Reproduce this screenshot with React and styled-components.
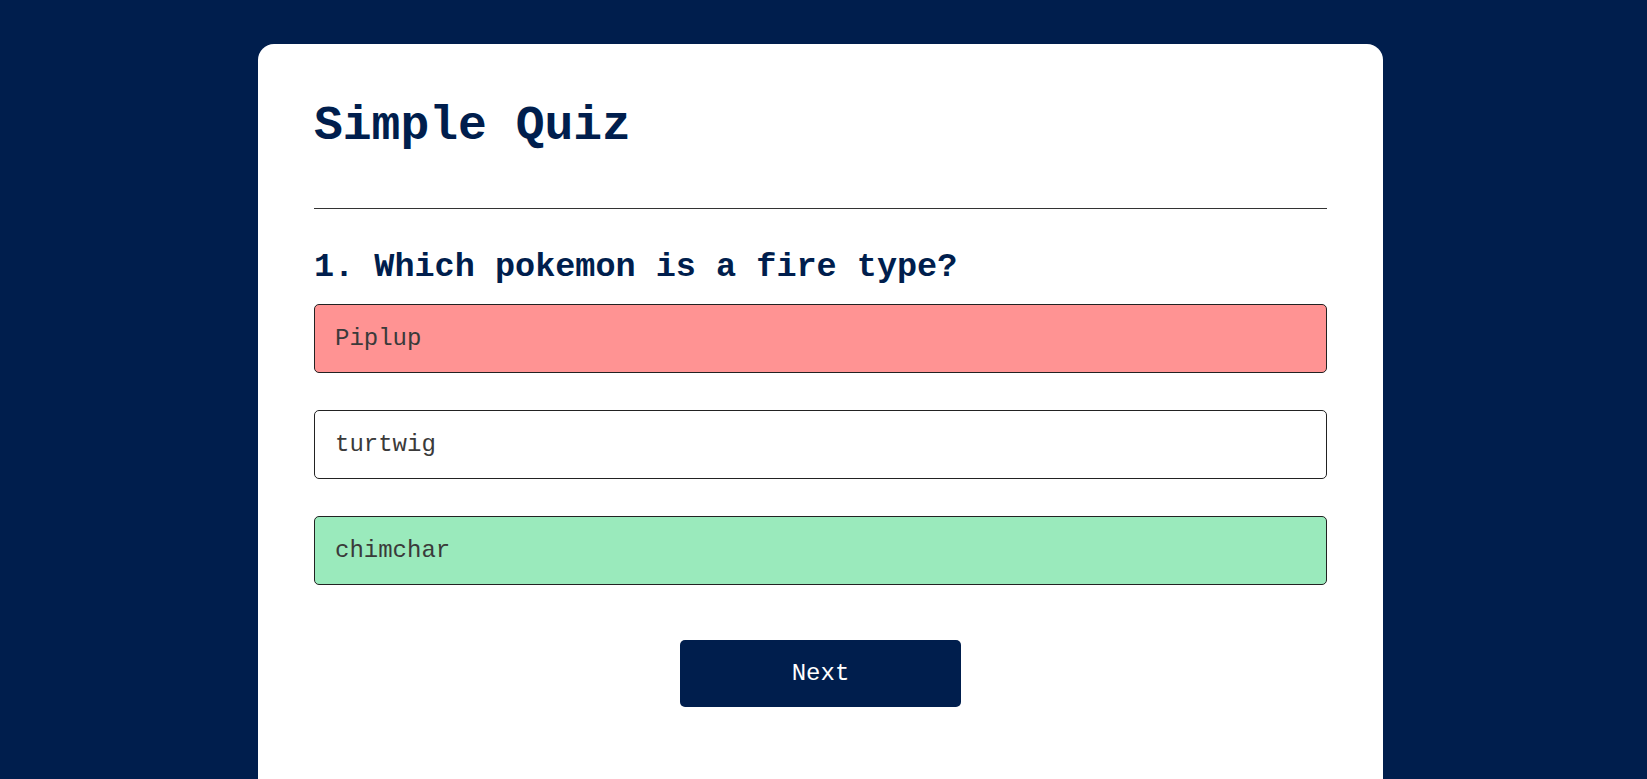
import React from 'react';
import styled, { createGlobalStyle } from 'styled-components';

const GlobalStyle = createGlobalStyle`
  * {
    box-sizing: border-box;
  }
  html,
  body {
    margin: 0;
    padding: 0;
    overflow: hidden;
    background: #001e4d;
    font-family: 'Courier New', 'Liberation Mono', monospace;
  }
`;

const Page = styled.main`
  display: flex;
  justify-content: center;
  padding: 44px 6px 0 0;
  min-height: 100vh;
`;

const Card = styled.section`
  width: 1125px;
  background: #fff;
  border-radius: 16px;
  padding: 55px 56px 100px;
`;

const Title = styled.h1`
  margin: 0;
  font-size: 48px;
  font-weight: bold;
  line-height: normal;
  color: #001e4d;
  padding-bottom: 55px;
  border-bottom: 1px solid #333;
`;

const Quiz = styled.div`
  padding-top: 38.5px;
`;

const Question = styled.h2`
  margin: 0 0 18px;
  font-size: 33.5px;
  font-weight: bold;
  line-height: normal;
  color: #001e4d;
`;

const Answers = styled.div`
  display: flex;
  flex-direction: column;
  gap: 37px;
`;

const colors = {
  wrong: '#ff9393',
  correct: '#9aeabc',
  idle: '#fff',
};

const Answer = styled.button`
  display: block;
  width: 100%;
  text-align: left;
  font-family: inherit;
  font-size: 24px;
  line-height: normal;
  color: #3a3a3a;
  background: ${(p) => colors[p.$state]};
  border: 1px solid #222;
  border-radius: 5px;
  padding: 20px;
  cursor: pointer;
`;

const Footer = styled.div`
  display: flex;
  justify-content: center;
  padding-top: 55px;
`;

const NextButton = styled.button`
  width: 281px;
  font-family: inherit;
  font-size: 24px;
  line-height: normal;
  color: #fff;
  background: #001e4d;
  border: none;
  border-radius: 5px;
  padding: 20px;
  cursor: pointer;
`;

const answers = [
  { text: 'Piplup', state: 'wrong' },
  { text: 'turtwig', state: 'idle' },
  { text: 'chimchar', state: 'correct' },
];

const App = () => {
  return (
    <>
      <GlobalStyle />
      <Page>
        <Card>
          <Title>Simple Quiz</Title>
          <Quiz>
            <Question>1. Which pokemon is a fire type?</Question>
            <Answers>
              {answers.map((a) => (
                <Answer key={a.text} $state={a.state}>
                  {a.text}
                </Answer>
              ))}
            </Answers>
            <Footer>
              <NextButton>Next</NextButton>
            </Footer>
          </Quiz>
        </Card>
      </Page>
    </>
  );
};

export default App;
